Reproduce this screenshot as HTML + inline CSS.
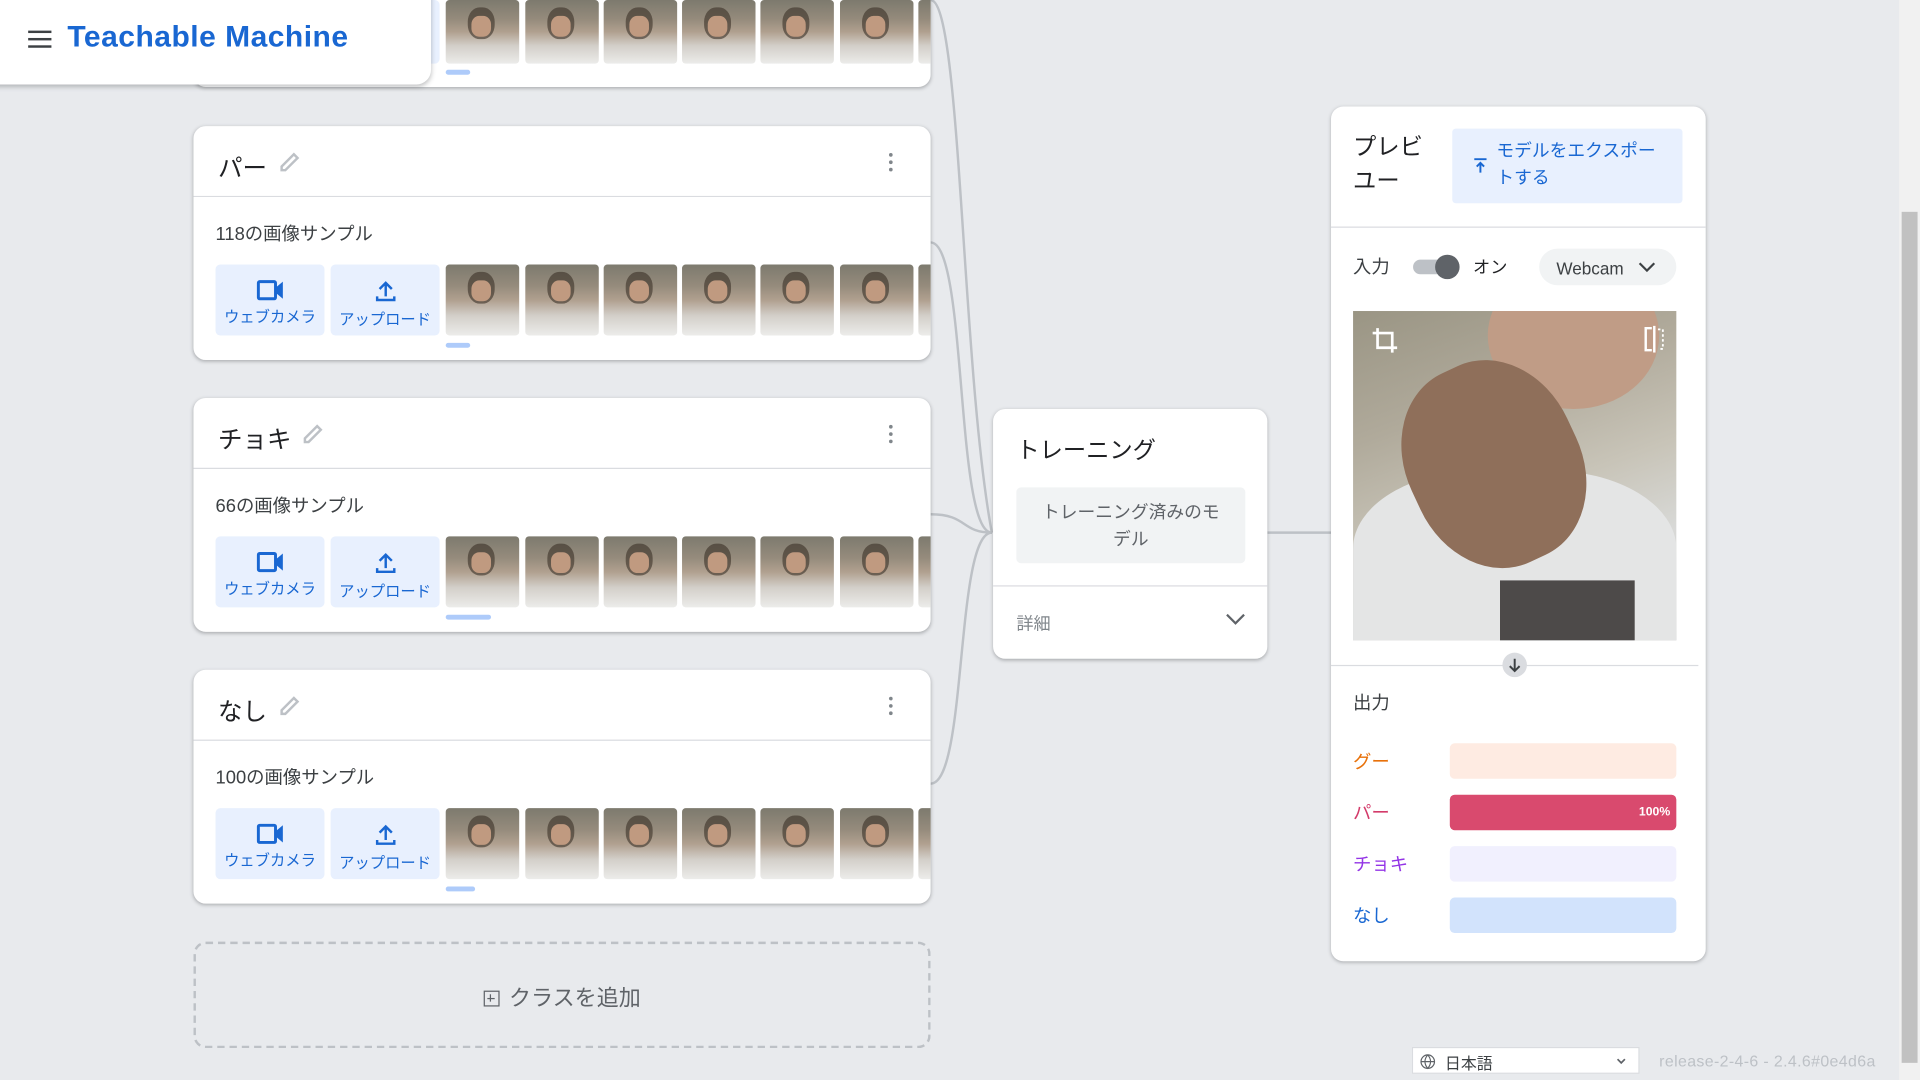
<!DOCTYPE html>
<html><head><meta charset="utf-8"><style>
*{box-sizing:border-box;margin:0;padding:0}
html,body{width:1920px;height:1080px;overflow:hidden;background:#e8eaed}
#s{position:absolute;left:0;top:0;width:1568px;height:882px;transform:scale(1.22449);transform-origin:0 0;background:#e8eaed;font-family:"Liberation Sans","Noto Sans CJK JP",sans-serif;color:#202124}
.abs{position:absolute}
.card{position:absolute;background:#fff;border-radius:10px;box-shadow:0 1px 3px rgba(60,64,67,.35)}
.cls{left:158px;width:602px;height:191px;overflow:hidden}
.cls .hd{height:58px;border-bottom:1px solid #dadce0;position:relative}
.cls .nm{position:absolute;left:20px;top:18px;font-size:20px;color:#202124}
.dots{position:absolute;right:30px;top:22px;width:4px}
.dots i{display:block;width:3px;height:3px;border-radius:50%;background:#80868b;margin-bottom:3px}
.cnt{position:absolute;left:18px;top:77px;font-size:15px;color:#3c4043}
.btn{position:absolute;top:113px;width:89px;height:58px;background:#e8f0fe;border-radius:4px;color:#1967d2;font-size:12.5px;text-align:center}
.btn svg{display:block;margin:12px auto 2px}
.th{position:absolute;top:113px;width:60px;height:58px;border-radius:3px;background:linear-gradient(180deg,#7d7a6e 0%,#958b7c 30%,#b0a08f 50%,#d3cfc9 72%,#ececea 100%)}
.th::before{content:"";position:absolute;left:18px;top:6px;width:22px;height:26px;border-radius:45%;background:#3a3027;opacity:.6}
.th::after{content:"";position:absolute;left:21px;top:13px;width:16px;height:17px;border-radius:40%;background:#c09a80}
.ind{position:absolute;top:177px;height:4px;border-radius:2px;background:#aecbfa}
.bar{position:absolute;left:1184px;width:185px;height:29px;border-radius:4px}
.lab{position:absolute;left:1105px;font-size:15px}
</style></head><body><div id="s">

<svg class="abs" style="left:0;top:0" width="1568" height="882">
<g fill="none" stroke="#bdc1c6" stroke-width="2">
<path d="M760 0 C 785 0, 785 300, 810 435"/>
<path d="M760 198 C 790 198, 780 435, 810 435"/>
<path d="M760 420 C 790 420, 785 435, 810 435"/>
<path d="M760 640 C 790 640, 780 435, 810 435"/>
<path d="M1035 435 L1087 435"/>
</g></svg>

<div class="card" style="left:158px;top:-140px;width:602px;height:211px;overflow:hidden">
<div class="btn" style="left:18px;top:140px;height:52px"></div>
<div class="btn" style="left:112px;top:140px;height:52px"></div>
<div class="th" style="left:206px;top:140px;height:52px"></div><div class="th" style="left:271px;top:140px;height:52px"></div><div class="th" style="left:335px;top:140px;height:52px"></div><div class="th" style="left:399px;top:140px;height:52px"></div><div class="th" style="left:463px;top:140px;height:52px"></div><div class="th" style="left:528px;top:140px;height:52px"></div><div class="th" style="left:592px;top:140px;height:52px"></div>
<div class="ind" style="left:206px;top:197px;width:20px"></div>
</div>

<div class="card" style="left:-10px;top:-10px;width:362px;height:79px;border-radius:0 0 12px 0;box-shadow:0 2px 4px rgba(60,64,67,.3)">
<div class="abs" style="left:33px;top:35px;width:19px"><div style="height:2px;background:#3c4043;margin-bottom:4px"></div><div style="height:2px;background:#3c4043;margin-bottom:4px"></div><div style="height:2px;background:#3c4043"></div></div>
<div class="abs" style="left:65px;top:27px;font-size:24.5px;font-weight:bold;color:#1967d2;letter-spacing:.4px">Teachable Machine</div>
</div>

<div class="card cls" style="top:103px">
<div class="hd"><div class="nm">パー</div>
<svg class="abs" style="left:68px;top:20px" width="20" height="20" viewBox="0 0 20 20"><path d="M4 16 L4 13 L14 3 L17 6 L7 16 Z" fill="none" stroke="#bdc1c6" stroke-width="2"/></svg>
<div class="dots"><i></i><i></i><i></i></div></div>
<div class="cnt">118の画像サンプル</div>
<div class="btn" style="left:18px"><svg width="24" height="18" viewBox="0 0 24 18"><rect x="2" y="2" width="14" height="14" rx="1" fill="none" stroke="#1967d2" stroke-width="2.4"/><path d="M16 7 L22 2 V16 L16 11Z" fill="#1967d2"/></svg>ウェブカメラ</div>
<div class="btn" style="left:112px"><svg width="20" height="20" viewBox="0 0 20 20"><path d="M10 3 V14 M5 8 L10 3 L15 8 M3 14 V17 H17 V14" fill="none" stroke="#1967d2" stroke-width="2"/></svg>アップロード</div>
<div class="th" style="left:206px"></div><div class="th" style="left:271px"></div><div class="th" style="left:335px"></div><div class="th" style="left:399px"></div><div class="th" style="left:463px"></div><div class="th" style="left:528px"></div><div class="th" style="left:592px"></div>
<div class="ind" style="left:206px;width:20px"></div>
</div>

<div class="card cls" style="top:325px">
<div class="hd"><div class="nm">チョキ</div>
<svg class="abs" style="left:87px;top:20px" width="20" height="20" viewBox="0 0 20 20"><path d="M4 16 L4 13 L14 3 L17 6 L7 16 Z" fill="none" stroke="#bdc1c6" stroke-width="2"/></svg>
<div class="dots"><i></i><i></i><i></i></div></div>
<div class="cnt">66の画像サンプル</div>
<div class="btn" style="left:18px"><svg width="24" height="18" viewBox="0 0 24 18"><rect x="2" y="2" width="14" height="14" rx="1" fill="none" stroke="#1967d2" stroke-width="2.4"/><path d="M16 7 L22 2 V16 L16 11Z" fill="#1967d2"/></svg>ウェブカメラ</div>
<div class="btn" style="left:112px"><svg width="20" height="20" viewBox="0 0 20 20"><path d="M10 3 V14 M5 8 L10 3 L15 8 M3 14 V17 H17 V14" fill="none" stroke="#1967d2" stroke-width="2"/></svg>アップロード</div>
<div class="th" style="left:206px"></div><div class="th" style="left:271px"></div><div class="th" style="left:335px"></div><div class="th" style="left:399px"></div><div class="th" style="left:463px"></div><div class="th" style="left:528px"></div><div class="th" style="left:592px"></div>
<div class="ind" style="left:206px;width:37px"></div>
</div>

<div class="card cls" style="top:547px">
<div class="hd"><div class="nm">なし</div>
<svg class="abs" style="left:68px;top:20px" width="20" height="20" viewBox="0 0 20 20"><path d="M4 16 L4 13 L14 3 L17 6 L7 16 Z" fill="none" stroke="#bdc1c6" stroke-width="2"/></svg>
<div class="dots"><i></i><i></i><i></i></div></div>
<div class="cnt">100の画像サンプル</div>
<div class="btn" style="left:18px"><svg width="24" height="18" viewBox="0 0 24 18"><rect x="2" y="2" width="14" height="14" rx="1" fill="none" stroke="#1967d2" stroke-width="2.4"/><path d="M16 7 L22 2 V16 L16 11Z" fill="#1967d2"/></svg>ウェブカメラ</div>
<div class="btn" style="left:112px"><svg width="20" height="20" viewBox="0 0 20 20"><path d="M10 3 V14 M5 8 L10 3 L15 8 M3 14 V17 H17 V14" fill="none" stroke="#1967d2" stroke-width="2"/></svg>アップロード</div>
<div class="th" style="left:206px"></div><div class="th" style="left:271px"></div><div class="th" style="left:335px"></div><div class="th" style="left:399px"></div><div class="th" style="left:463px"></div><div class="th" style="left:528px"></div><div class="th" style="left:592px"></div>
<div class="ind" style="left:206px;width:24px"></div>
</div>

<div class="abs" style="left:158px;top:769px;width:602px;height:87px;border:2px dashed #bdc1c6;border-radius:10px;text-align:center;padding-top:30px;font-size:18px;color:#5f6368">
<span style="display:inline-block;width:13px;height:13px;border:1.5px solid #5f6368;position:relative;vertical-align:-1px;margin-right:8px"><span style="position:absolute;left:2px;top:4.5px;width:6px;height:1.5px;background:#5f6368"></span><span style="position:absolute;left:4.3px;top:2px;width:1.5px;height:6px;background:#5f6368"></span></span>クラスを追加</div>

<div class="card" style="left:811px;top:334px;width:224px;height:204px">
<div class="abs" style="left:19px;top:19px;font-size:19px">トレーニング</div>
<div class="abs" style="left:19px;top:64px;width:187px;height:62px;background:#f1f3f4;border-radius:4px;text-align:center;font-size:14.5px;color:#5f6368;padding-top:10px;line-height:22px">トレーニング済みのモ<br>デル</div>
<div class="abs" style="left:0;top:144px;width:224px;border-top:1px solid #dadce0"></div>
<div class="abs" style="left:19px;top:165px;font-size:14px;color:#80868b">詳細</div>
<svg class="abs" style="left:189px;top:165px" width="18" height="12" viewBox="0 0 18 12"><path d="M2 3 L9 10 L16 3" fill="none" stroke="#5f6368" stroke-width="1.8"/></svg>
</div>

<div class="card" style="left:1087px;top:87px;width:306px;height:698px">
<div class="abs" style="left:18px;top:20px;font-size:19px;line-height:28px">プレビ<br>ユー</div>
<div class="abs" style="left:99px;top:18px;width:188px;height:61px;background:#e8f0fe;border-radius:3px;color:#1967d2;font-size:14.5px;line-height:22px;padding:8px 0 0 36px">モデルをエクスポー<br>トする</div>
<svg class="abs" style="left:115px;top:41px" width="14" height="14" viewBox="0 0 14 14"><path d="M2 2 H12 M7 13 V5 M4 8 L7 5 L10 8" fill="none" stroke="#1967d2" stroke-width="1.6"/></svg>
<div class="abs" style="left:0;top:98px;width:306px;border-top:1px solid #dadce0"></div>
<div class="abs" style="left:18px;top:120px;font-size:15px;color:#3c4043">入力</div>
<div class="abs" style="left:67px;top:125px;width:36px;height:12px;border-radius:6px;background:#bdc1c6"></div>
<div class="abs" style="left:85px;top:121px;width:20px;height:20px;border-radius:50%;background:#5f6368"></div>
<div class="abs" style="left:116px;top:121px;font-size:14px">オン</div>
<div class="abs" style="left:170px;top:116px;width:112px;height:30px;border-radius:15px;background:#f1f3f4;font-size:14px;color:#3c4043;padding:8px 0 0 14px">Webcam</div>
<svg class="abs" style="left:250px;top:125px" width="16" height="12" viewBox="0 0 16 12"><path d="M2 3 L8 9 L14 3" fill="none" stroke="#3c4043" stroke-width="1.8"/></svg>
<div class="abs" style="left:18px;top:167px;width:264px;height:269px;overflow:hidden;background:linear-gradient(160deg,#9a9584 0%,#b0aa9b 30%,#c8c4b8 55%,#d8d9d7 75%,#c4c5c4 100%)">
<div class="abs" style="left:110px;top:-40px;width:140px;height:120px;border-radius:50%;background:#c09c86"></div>
<div class="abs" style="left:0;top:130px;width:264px;height:160px;border-radius:40% 40% 0 0;background:#e4e5e5"></div>
<div class="abs" style="left:45px;top:40px;width:140px;height:170px;border-radius:45%;background:#8f6f5a;transform:rotate(-25deg)"></div>
<div class="abs" style="left:120px;top:220px;width:110px;height:49px;background:#4d4a49"></div>
<svg class="abs" style="left:14px;top:12px" width="24" height="24" viewBox="0 0 24 24"><path d="M6 2 V18 H22 M2 6 H18 V22" fill="none" stroke="#fff" stroke-width="2.2"/></svg>
<svg class="abs" style="left:236px;top:12px" width="20" height="22" viewBox="0 0 20 22"><path d="M8 2 H3 V20 H8 M10 0 V22" fill="none" stroke="#fff" stroke-width="2"/><path d="M13 3 H17 V19 H13" fill="none" stroke="#fff" stroke-width="1.5" stroke-dasharray="2 2"/></svg>
</div>
<div class="abs" style="left:0;top:456px;width:300px;border-top:1px solid #dadce0"></div>
<div class="abs" style="left:140px;top:446px;width:20px;height:20px;border-radius:50%;background:#dadce0"></div>
<svg class="abs" style="left:143px;top:449px" width="14" height="14" viewBox="0 0 14 14"><path d="M7 2 V12 M3 8 L7 12 L11 8" fill="none" stroke="#3c4043" stroke-width="1.6"/></svg>
<div class="abs" style="left:18px;top:476px;font-size:15px;color:#3c4043">出力</div>
</div>
<div class="lab" style="top:611px;color:#e8710a">グー</div>
<div class="bar" style="top:607px;background:#feebe2"></div>
<div class="lab" style="top:653px;color:#d33b6a">パー</div>
<div class="bar" style="top:649px;background:#d94a6e;color:#fff;font-size:10px;font-weight:bold;text-align:right;padding:9px 5px 0 0">100%</div>
<div class="lab" style="top:695px;color:#9334e6">チョキ</div>
<div class="bar" style="top:691px;background:#f1f0fe"></div>
<div class="lab" style="top:737px;color:#1967d2">なし</div>
<div class="bar" style="top:733px;background:#d2e3fc"></div>

<div class="abs" style="left:1153px;top:855px;width:186px;height:22px;background:#fff;border:1px solid #dadce0;font-size:13px;color:#3c4043;padding:2px 0 0 26px">日本語</div>
<svg class="abs" style="left:1159px;top:860px" width="14" height="14" viewBox="0 0 14 14"><circle cx="7" cy="7" r="5.5" fill="none" stroke="#5f6368"/><path d="M1.5 7 H12.5 M7 1.5 C4 5 4 9 7 12.5 C10 9 10 5 7 1.5" fill="none" stroke="#5f6368"/></svg>
<svg class="abs" style="left:1319px;top:863px" width="10" height="7" viewBox="0 0 10 7"><path d="M2 2 L5 5 L8 2" fill="none" stroke="#5f6368" stroke-width="1.4"/></svg>
<div class="abs" style="left:1355px;top:859px;font-size:13px;color:#bdc1c6;letter-spacing:.3px">release-2-4-6 - 2.4.6#0e4d6a</div>

<div class="abs" style="left:1551px;top:0;width:17px;height:882px;background:#f1f1f1"></div>
<div class="abs" style="left:1553px;top:173px;width:13px;height:695px;background:#c1c1c1"></div>
</div></body></html>
